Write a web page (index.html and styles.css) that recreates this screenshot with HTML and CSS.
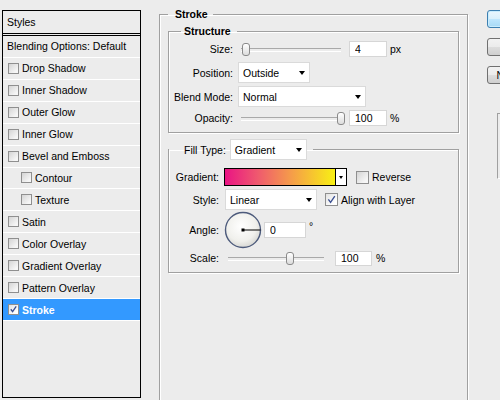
FILE: index.html
```html
<!DOCTYPE html>
<html lang="en">
<head>
    <meta charset="UTF-8">
    <meta name="viewport" content="width=device-width, initial-scale=1.0">
    <title>Layer Style</title>
    <link rel="stylesheet" href="styles.css">
</head>
<body>
    <div class="dialog">
        <div class="styles-panel">
            <div class="panel-title">Styles</div>
            <div class="style-item">Blending Options: Default</div>
            <div class="style-item"><span class="check"></span>Drop Shadow</div>
            <div class="style-item"><span class="check"></span>Inner Shadow</div>
            <div class="style-item"><span class="check"></span>Outer Glow</div>
            <div class="style-item"><span class="check"></span>Inner Glow</div>
            <div class="style-item"><span class="check"></span>Bevel and Emboss</div>
            <div class="style-item sub"><span class="check"></span>Contour</div>
            <div class="style-item sub"><span class="check"></span>Texture</div>
            <div class="style-item"><span class="check"></span>Satin</div>
            <div class="style-item"><span class="check"></span>Color Overlay</div>
            <div class="style-item"><span class="check"></span>Gradient Overlay</div>
            <div class="style-item"><span class="check"></span>Pattern Overlay</div>
            <div class="style-item selected">
                <span class="check on"><svg viewBox="0 0 11 11"><path d="M2.2 5.2 L4.4 8.2 L8.8 1.8"/></svg></span>Stroke
            </div>
        </div>

        <fieldset class="group stroke">
            <legend>Stroke</legend>

            <fieldset class="group structure">
                <legend>Structure</legend>
                <div class="row">
                    <label>Size:</label>
                    <div class="slider"><span class="thumb" style="left: 1px"></span></div>
                    <input type="text" value="4">
                    <span class="unit">px</span>
                </div>
                <div class="row">
                    <label>Position:</label>
                    <div class="select pos">Outside</div>
                </div>
                <div class="row">
                    <label>Blend Mode:</label>
                    <div class="select blend">Normal</div>
                </div>
                <div class="row tight">
                    <label>Opacity:</label>
                    <div class="slider"><span class="thumb" style="left: 96px"></span></div>
                    <input type="text" value="100">
                    <span class="unit">%</span>
                </div>
            </fieldset>

            <fieldset class="group fill">
                <legend class="fill-legend"><span class="fill-label">Fill Type:</span><span class="select filltype">Gradient</span></legend>
                <div class="row grad-row">
                    <label>Gradient:</label>
                    <div class="gradient">
                        <span class="swatch"></span>
                        <span class="drop"></span>
                    </div>
                    <span class="check big reverse"></span>
                    <span class="check-label">Reverse</span>
                </div>
                <div class="row style-row">
                    <label>Style:</label>
                    <div class="select linear">Linear</div>
                    <span class="check big on align"><svg viewBox="0 0 13 13"><path d="M2.8 6.4 L5.4 9.8 L10.4 2.4"/></svg></span>
                    <span class="check-label">Align with Layer</span>
                </div>
                <div class="row angle-row">
                    <label>Angle:</label>
                    <svg class="dial" viewBox="0 0 38 38">
                        <defs>
                            <radialGradient id="dialFill" cx="45%" cy="40%" r="60%">
                                <stop offset="0" stop-color="#ffffff"/>
                                <stop offset="0.7" stop-color="#f0f0ec"/>
                                <stop offset="1" stop-color="#d8d8d4"/>
                            </radialGradient>
                        </defs>
                        <circle cx="19" cy="19" r="17.5" fill="url(#dialFill)" stroke="#4d5b7c" stroke-width="1.4"/>
                        <line x1="19" y1="19" x2="36.5" y2="19" stroke="#000" stroke-width="1"/>
                        <rect x="17.5" y="17.5" width="3" height="3" fill="#000"/>
                    </svg>
                    <input type="text" class="angle" value="0">
                    <span class="deg">°</span>
                </div>
                <div class="row scale-row">
                    <label>Scale:</label>
                    <div class="slider scale"><span class="thumb" style="left: 58px"></span></div>
                    <input type="text" class="scale-input" value="100">
                    <span class="unit">%</span>
                </div>
            </fieldset>
        </fieldset>

        <div class="buttons">
            <button class="default">OK</button>
            <button>Cancel</button>
            <button>New Style...</button>
            <div class="preview"></div>
        </div>
    </div>
</body>
</html>
```

FILE: styles.css
```css
* {
    margin: 0;
    padding: 0;
    box-sizing: border-box;
}

body {
    width: 500px;
    height: 400px;
    overflow: hidden;
    background-color: #ececec;
    font-family: 'Liberation Sans', Arial, sans-serif;
    font-size: 10.5px;
    color: #000;
}

.dialog {
    display: flex;
    align-items: flex-start;
    padding-left: 2px;
}

.dialog > * {
    flex-shrink: 0;
}

/* left list of styles */
.styles-panel {
    margin-top: 10px;
    width: 139px;
    height: 388px;
    border: 1px solid #000;
}

.panel-title {
    height: 25px;
    display: flex;
    align-items: center;
    padding-left: 4px;
    border-bottom: 3px double #000;
}

.style-item {
    height: 21.93px;
    display: flex;
    align-items: center;
    padding-left: 4px;
    border-bottom: 1px solid #fff;
}

.style-item .check {
    margin-left: 1px;
    margin-right: 3px;
}

.style-item.sub {
    padding-left: 17px;
}

.style-item.selected {
    background-color: #3399ff;
    color: #fff;
    font-weight: bold;
}

.check {
    display: inline-flex;
    align-items: center;
    justify-content: center;
    width: 11px;
    height: 11px;
    border: 1px solid #8f8f8f;
    background: linear-gradient(135deg, #d4d4d4, #f6f6f6 80%);
    flex-shrink: 0;
}

.check.on {
    background: linear-gradient(135deg, #e2e2e2, #ffffff 80%);
}

.check svg {
    width: 100%;
    height: 100%;
}

.check svg path {
    fill: none;
    stroke: #3b4f91;
    stroke-width: 1.6;
}

.check.big {
    width: 13px;
    height: 13px;
}

.check-label {
    margin-left: 3px;
}

/* group boxes */
.group {
    border: 1px solid #a0a0a0;
    box-shadow: inset 1px 1px 0 #fff, 1px 1px 0 #fff;
}

.group legend {
    line-height: 14px;
    font-weight: bold;
}

.stroke {
    margin-left: 18px;
    margin-top: 7px;
    width: 309px;
    height: 400px;
    padding: 3px 8px 0 8px;
}

.stroke > legend {
    padding: 0 5px 0 7px;
}

.structure {
    padding: 0 0 4px 0;
}

.structure > legend {
    margin-left: 12px;
    padding: 0 6px 0 3px;
}

.row {
    display: flex;
    align-items: center;
    height: 21px;
    margin-bottom: 3px;
}

.row.tight {
    margin-top: -3px;
    margin-bottom: 0;
}

.row label {
    width: 64px;
    margin-right: 5px;
    text-align: right;
    flex-shrink: 0;
}

.slider {
    position: relative;
    width: 104px;
    height: 14px;
    margin-left: 3px;
}

.slider::before {
    content: '';
    position: absolute;
    left: 0;
    right: 4px;
    top: 6px;
    height: 2px;
    border-top: 1px solid #a9a9a9;
    border-bottom: 1px solid #fff;
}

.thumb {
    position: absolute;
    top: 1px;
    width: 8px;
    height: 13px;
    border: 1px solid #8a8a8a;
    border-radius: 3px;
    background: linear-gradient(#ffffff, #dcdcdc);
}

input {
    width: 38px;
    height: 16px;
    margin-left: 4px;
    padding-left: 5px;
    border: 1px solid #d6d6d6;
    background: #fff;
    font: inherit;
    color: #000;
}

.unit {
    margin-left: 3px;
}

.select {
    display: flex;
    align-items: center;
    justify-content: space-between;
    height: 21px;
    padding: 0 4px;
    border: 1px solid #dadada;
    background: #fff;
    font-weight: normal;
}

.select::after {
    content: '';
    border-style: solid;
    border-width: 4px 3.5px 0 3.5px;
    border-color: #000 transparent transparent transparent;
}

.select.pos {
    width: 72px;
}

.select.blend {
    width: 128px;
}

/* fill type */
.fill {
    margin-top: 6px;
    padding: 8px 0 5px 0;
}

.group .fill-legend {
    display: flex;
    align-items: center;
    padding: 0 6px 0 15px;
    font-weight: normal;
    line-height: normal;
}

.fill-label {
    flex-shrink: 0;
}

.select.filltype {
    width: 77px;
    margin-left: 4px;
}

.fill .row {
    margin-bottom: 0;
}

.fill .row label {
    width: 50px;
}

.grad-row {
    height: 18px;
}

.style-row {
    margin-top: 2px;
    height: 23px;
}

.angle-row {
    margin-top: 1px;
    height: 36px;
}

.scale-row {
    margin-top: 1px;
    height: 18px;
}

.gradient {
    display: flex;
    width: 123px;
    height: 18px;
    border: 1px solid #000;
}

.swatch {
    flex: 1;
    background: linear-gradient(to right, #ea1484, #ef5a6e 30%, #f59c4a 60%, #f8f014);
}

.drop {
    width: 11px;
    display: flex;
    align-items: center;
    justify-content: center;
    border-left: 1px solid #000;
    background: #fff;
}

.drop::after {
    content: '';
    border-style: solid;
    border-width: 3px 2.5px 0 2.5px;
    border-color: #000 transparent transparent transparent;
}

.reverse {
    margin-left: 9px;
}

.select.linear {
    width: 92px;
    margin-left: 1px;
}

.align {
    margin-left: 8px;
}

.dial {
    width: 38px;
    height: 38px;
    flex-shrink: 0;
}

input.angle {
    width: 42px;
    margin-left: 2px;
}

.deg {
    margin-left: 3px;
    align-self: flex-start;
    margin-top: 8px;
}

.slider.scale {
    width: 100px;
    margin-left: 4px;
}

input.scale-input {
    width: 37px;
    height: 15px;
    margin-left: 7px;
}

.scale-row .unit {
    margin-left: 4px;
}

/* right buttons */
.buttons {
    margin-left: 19px;
    margin-top: 10px;
    display: flex;
    flex-direction: column;
    gap: 10px;
}

.buttons button {
    width: 75px;
    height: 18px;
    border: 1px solid #707070;
    border-radius: 3px;
    background: linear-gradient(#f2f2f2, #ebebeb 50%, #dddddd 51%, #cfcfcf);
    font: inherit;
    color: #000;
}

.buttons button.default {
    border-color: #3c7fb1;
    background: linear-gradient(#eaf6fd, #d9f0fc 50%, #bee6fd 51%, #a7d9f5);
    box-shadow: inset 0 0 0 1px #c8ecfd;
}

.preview {
    margin-top: 19px;
    margin-left: 10px;
    width: 60px;
    height: 66px;
    border-left: 1px solid #a0a0a0;
    border-top: 1px solid #a0a0a0;
    border-bottom: 1px solid #fff;
}
```
